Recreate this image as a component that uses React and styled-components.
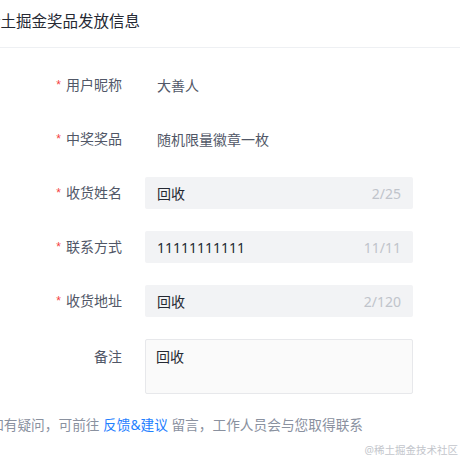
import React from 'react'
import styled, { createGlobalStyle } from 'styled-components'

const GlobalStyle = createGlobalStyle`
  html, body {
    margin: 0;
    padding: 0;
    background: #ffffff;
    overflow: hidden;
  }
  body {
    font-family: "Noto Sans", "Noto Sans CJK SC", sans-serif;
    -webkit-font-smoothing: antialiased;
  }
`

const Page = styled.div`
  position: relative;
  width: 460px;
  height: 460px;
  overflow: hidden;
`

const Dialog = styled.div`
  width: 490px;
  margin-left: -15px;
`

const Header = styled.div`
  height: 48px;
  padding-top: 9px;
  box-sizing: border-box;
  border-bottom: 1px solid #eef0f3;
`

const Title = styled.div`
  font-size: 15.5px;
  line-height: 24px;
  color: #252933;
  white-space: nowrap;
`

const Body = styled.div`
  padding: 21px 0 0 33px;
`

const Row = styled.div`
  display: flex;
  align-items: ${p => (p.$top ? 'flex-start' : 'center')};
  height: ${p => (p.$top ? 'auto' : '32px')};
  margin-bottom: ${p => (p.$last ? '22px' : '22px')};
`

const Label = styled.div`
  width: 104px;
  flex-shrink: 0;
  margin-right: 23px;
  margin-top: ${p => (p.$top ? '2px' : '0')};
  text-align: right;
  font-size: 14px;
  line-height: 32px;
  color: #515767;
  white-space: nowrap;
`

const Star = styled.span`
  font-family: "Liberation Sans", sans-serif;
  font-size: 12px;
  color: #f53f3f;
  margin-right: 5px;
  vertical-align: 1px;
`

const Value = styled.div`
  padding-left: 12px;
  font-size: 14px;
  color: #515767;
`

const Field = styled.div`
  width: 268px;
  height: 32px;
  box-sizing: border-box;
  display: flex;
  align-items: center;
  justify-content: space-between;
  padding: 0 12px;
  background: #f2f3f5;
  border-radius: 2px;
  font-size: 14px;
`

const FieldText = styled.span`
  color: #252933;
`

const Counter = styled.span`
  color: #c0c4cb;
`

const TextArea = styled.div`
  width: 268px;
  height: 55px;
  box-sizing: border-box;
  padding: 6px 10px;
  background: #fafafa;
  border: 1px solid #e7e8eb;
  border-radius: 2px;
  font-size: 14px;
  line-height: 22px;
  color: #252933;
`

const Footer = styled.div`
  padding-left: 5px;
  font-size: 13.7px;
  line-height: 18px;
  color: #8a919f;
  white-space: nowrap;
`

const Link = styled.a`
  color: #1e80ff;
  text-decoration: none;
`

const Watermark = styled.div`
  position: absolute;
  right: 2px;
  bottom: 3px;
  font-size: 10.5px;
  line-height: 14px;
  color: #c3c6cc;
  white-space: nowrap;
`

const fields = [
  { label: '收货姓名', value: '回收', count: '2/25' },
  { label: '联系方式', value: '11111111111', count: '11/11' },
  { label: '收货地址', value: '回收', count: '2/120' },
]

export default function App() {
  return (
    <Page>
      <GlobalStyle />
      <Dialog>
        <Header>
          <Title>稀土掘金奖品发放信息</Title>
        </Header>
        <Body>
          <Row>
            <Label><Star>*</Star>用户昵称</Label>
            <Value>大善人</Value>
          </Row>
          <Row>
            <Label><Star>*</Star>中奖奖品</Label>
            <Value>随机限量徽章一枚</Value>
          </Row>
          {fields.map(f => (
            <Row key={f.label}>
              <Label><Star>*</Star>{f.label}</Label>
              <Field>
                <FieldText>{f.value}</FieldText>
                <Counter>{f.count}</Counter>
              </Field>
            </Row>
          ))}
          <Row $top $last>
            <Label $top>备注</Label>
            <TextArea>回收</TextArea>
          </Row>
        </Body>
        <Footer>
          如有疑问，可前往 <Link href="#">反馈&amp;建议</Link> 留言，工作人员会与您取得联系
        </Footer>
      </Dialog>
      <Watermark>@稀土掘金技术社区</Watermark>
    </Page>
  )
}
